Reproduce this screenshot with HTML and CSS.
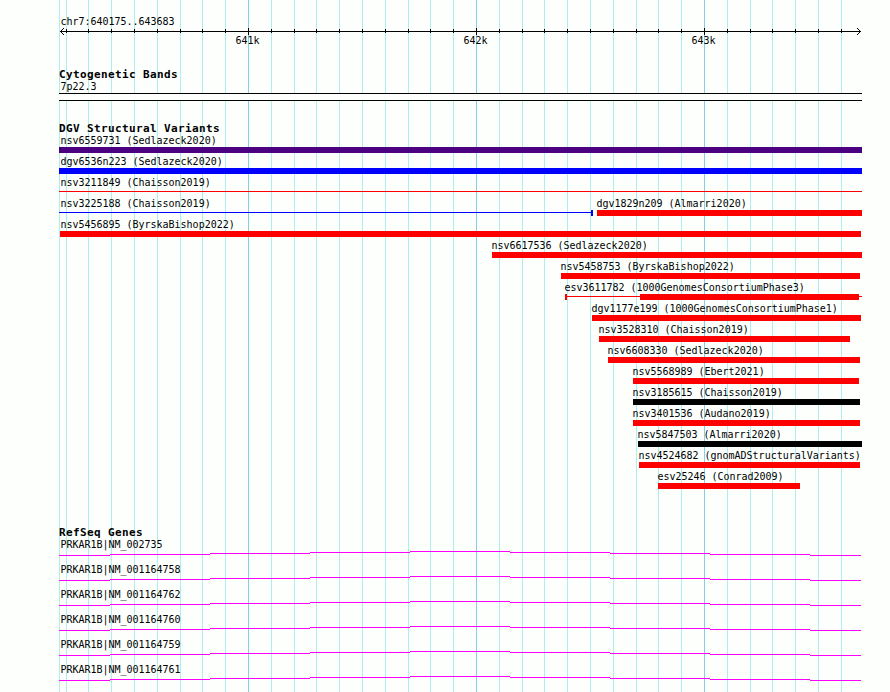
FILE: index.html
```html
<!DOCTYPE html>
<html lang="en">
<head>
<meta charset="utf-8">
<title>chr7:640175..643683</title>
<link rel="stylesheet" href="styles.css">
</head>
<body>
<svg class="gridlines" width="890" height="692" aria-hidden="true">
  <path class="minor" d="M59.5 0V692M66.5 0V692M88.5 0V692M111.5 0V692M134.5 0V692M157.5 0V692M180.5 0V692M202.5 0V692M225.5 0V692M271.5 0V692M294.5 0V692M316.5 0V692M339.5 0V692M362.5 0V692M385.5 0V692M408.5 0V692M430.5 0V692M453.5 0V692M499.5 0V692M522.5 0V692M544.5 0V692M567.5 0V692M590.5 0V692M613.5 0V692M636.5 0V692M658.5 0V692M681.5 0V692M727.5 0V692M750.5 0V692M772.5 0V692M795.5 0V692M818.5 0V692M841.5 0V692"/>
  <path class="major" d="M248.5 0V692M476.5 0V692M704.5 0V692"/>
</svg>
<svg class="defs" width="0" height="0" aria-hidden="true">
  <symbol id="intron" viewBox="0 0 803 5">
    <path d="M0 4.5H51M51 3.5H151M151 2.5H251M251 1.5H351M351 .5H451M451 1.5H551M551 2.5H651M651 3.5H751M751 4.5H802"/>
  </symbol>
</svg>
<main class="browser">
  <header class="ruler">
    <div class="label">chr7:640175..643683</div>
    <svg class="axis" width="803" height="7" aria-hidden="true">
      <path d="M1 3.5H802M7.5 1V5M29.5 1V5M52.5 1V5M75.5 1V5M98.5 1V5M121.5 1V5M143.5 1V5M166.5 1V5M189.5 0V7M212.5 1V5M235.5 1V5M257.5 1V5M280.5 1V5M303.5 1V5M326.5 1V5M349.5 1V5M371.5 1V5M394.5 1V5M417.5 0V7M440.5 1V5M463.5 1V5M485.5 1V5M508.5 1V5M531.5 1V5M554.5 1V5M577.5 1V5M599.5 1V5M622.5 1V5M645.5 0V7M668.5 1V5M691.5 1V5M713.5 1V5M736.5 1V5M759.5 1V5M782.5 1V5"/>
      <path d="M4 .5H5M3 1.5H4M2 2.5H3M2 4.5H3M3 5.5H4M4 6.5H5M798 .5H799M799 1.5H800M800 2.5H801M800 4.5H801M799 5.5H800M798 6.5H799"/>
    </svg>
    <div class="ticks"><span>641k</span><span>642k</span><span>643k</span></div>
  </header>

  <section class="track cyto">
    <h2>Cytogenetic Bands</h2>
    <div class="label">7p22.3</div>
    <div class="band"></div>
  </section>

  <section class="track variants">
    <h2>DGV Structural Variants</h2>
    <div class="row"><div class="item edge indigo" style="--x:0px;--w:803px"><span>nsv6559731 (Sedlazeck2020)</span><i></i></div></div>
    <div class="row"><div class="item edge blue" style="--x:0px;--w:803px"><span>dgv6536n223 (Sedlazeck2020)</span><i></i></div></div>
    <div class="row"><div class="item edge thin" style="--x:0px;--w:803px"><span>nsv3211849 (Chaisson2019)</span><i></i></div></div>
    <div class="row">
      <div class="item edge thin blue cap-end" style="--x:0px;--w:534px"><span>nsv3225188 (Chaisson2019)</span><i></i></div>
      <div class="item" style="--x:4px;--w:265px"><span>dgv1829n209 (Almarri2020)</span><i></i></div>
    </div>
    <div class="row"><div class="item edge inset" style="--x:1px;--w:801px"><span>nsv5456895 (ByrskaBishop2022)</span><i></i></div></div>
    <div class="row"><div class="item" style="--x:433px;--w:370px"><span>nsv6617536 (Sedlazeck2020)</span><i></i></div></div>
    <div class="row"><div class="item" style="--x:502px;--w:299px"><span>nsv5458753 (ByrskaBishop2022)</span><i></i></div></div>
    <div class="row"><div class="item compound" style="--x:506px;--w:297px"><span>esv3611782 (1000GenomesConsortiumPhase3)</span><i></i></div></div>
    <div class="row"><div class="item" style="--x:533px;--w:269px"><span>dgv1177e199 (1000GenomesConsortiumPhase1)</span><i></i></div></div>
    <div class="row"><div class="item" style="--x:540px;--w:251px"><span>nsv3528310 (Chaisson2019)</span><i></i></div></div>
    <div class="row"><div class="item" style="--x:549px;--w:252px"><span>nsv6608330 (Sedlazeck2020)</span><i></i></div></div>
    <div class="row"><div class="item" style="--x:574px;--w:226px"><span>nsv5568989 (Ebert2021)</span><i></i></div></div>
    <div class="row"><div class="item black" style="--x:574px;--w:227px"><span>nsv3185615 (Chaisson2019)</span><i></i></div></div>
    <div class="row"><div class="item" style="--x:574px;--w:227px"><span>nsv3401536 (Audano2019)</span><i></i></div></div>
    <div class="row"><div class="item black" style="--x:579px;--w:224px"><span>nsv5847503 (Almarri2020)</span><i></i></div></div>
    <div class="row"><div class="item" style="--x:580px;--w:221px"><span>nsv4524682 (gnomADStructuralVariants)</span><i></i></div></div>
    <div class="row"><div class="item" style="--x:599px;--w:142px"><span>esv25246 (Conrad2009)</span><i></i></div></div>
  </section>

  <section class="track genes">
    <h2>RefSeq Genes</h2>
    <div class="gene"><div class="label">PRKAR1B|NM_002735</div><svg width="803" height="5"><use href="#intron"/></svg></div>
    <div class="gene"><div class="label">PRKAR1B|NM_001164758</div><svg width="803" height="5"><use href="#intron"/></svg></div>
    <div class="gene"><div class="label">PRKAR1B|NM_001164762</div><svg width="803" height="5"><use href="#intron"/></svg></div>
    <div class="gene"><div class="label">PRKAR1B|NM_001164760</div><svg width="803" height="5"><use href="#intron"/></svg></div>
    <div class="gene"><div class="label">PRKAR1B|NM_001164759</div><svg width="803" height="5"><use href="#intron"/></svg></div>
    <div class="gene"><div class="label">PRKAR1B|NM_001164761</div><svg width="803" height="5"><use href="#intron"/></svg></div>
  </section>
</main>
</body>
</html>
```
FILE: styles.css
```css
* { box-sizing: border-box; }

body {
  margin: 0;
  width: 890px;
  height: 692px;
  overflow: hidden;
  background: #fdfffc;
  color: #000;
  font: 10px/12px "DejaVu Sans Mono", monospace;
  letter-spacing: -0.01px;
}

svg { display: block; }

/* Coordinate lines behind every track */
.gridlines {
  position: absolute;
  inset: 0;
  z-index: -1;
  shape-rendering: crispEdges;
}
.gridlines .minor { stroke: #afeeee; }
.gridlines .major { stroke: #87ceeb; }
.defs { position: absolute; }

.browser {
  width: 862px;
  padding: 16px 0 0 59px;
}

.label { height: 12px; padding-left: 1.4px; white-space: pre; }

.axis { stroke: #000; fill: none; shape-rendering: crispEdges; }
.ticks {
  display: grid;
  grid-template-columns: 228px 228px 60px;
  padding-left: 176.4px;
  height: 12px;
}

.track h2 {
  margin: 0;
  height: 12px;
  font-size: 11px;
  line-height: 12px;
  font-weight: bold;
  letter-spacing: 0.378px;
  white-space: pre;
}

.cyto { margin-top: 22px; }
.band {
  height: 8px;
  border: solid #000;
  border-width: 1px 0;
  background: #fdfffc;
}

.variants { margin-top: 22px; }
.row { display: flex; height: 21px; }
.item {
  --color: #f00;
  flex: none;
  width: var(--w);
  margin-left: var(--x);
}
.item span {
  display: block;
  height: 12px;
  margin-left: -0.6px;
  white-space: nowrap;
}
.item.edge span { margin-left: 1.4px; }
.item.inset span { margin-left: 0.4px; }
.item i {
  display: block;
  height: 6px;
  background: var(--color);
}
.item.blue { --color: #00f; }
.item.indigo { --color: #4b0082; }
.item.black { --color: #000; }

.thin i {
  background: linear-gradient(var(--color), var(--color)) 0 2px / 100% 1px no-repeat;
}
.cap-end i { border-right: 2px solid var(--color); }
.compound i {
  border-left: 2px solid var(--color);
  background:
    linear-gradient(var(--color), var(--color)) 73px 0 / 219px 6px no-repeat,
    linear-gradient(var(--color), var(--color)) 0 2px / 100% 1px no-repeat;
}
.item.thin i {
  background: linear-gradient(var(--color), var(--color)) 0 2px / 100% 1px no-repeat;
}

.genes { margin-top: 35px; }
.gene { height: 25px; }
.gene svg {
  stroke: #f0f;
  fill: none;
  shape-rendering: crispEdges;
}
```
